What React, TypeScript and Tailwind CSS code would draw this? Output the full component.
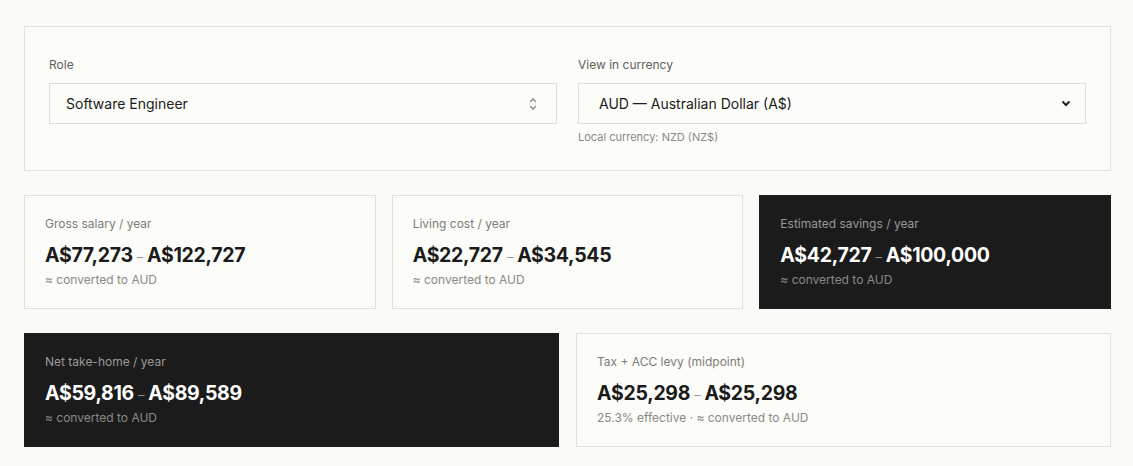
import React from 'react';

interface StatCardProps {
  label: string;
  low: string;
  high: string;
  note: string;
  dark?: boolean;
}

const StatCard: React.FC<StatCardProps> = ({ label, low, high, note, dark }) => (
  <div
    className={
      dark
        ? 'h-[114px] bg-[#1b1b1b] border border-[#1b1b1b] px-5 pt-[18px]'
        : 'h-[114px] bg-[#fcfcf9] border border-[#e3e1db] px-5 pt-[18px]'
    }
  >
    <div className={dark ? 'text-[12px] text-[#9a9a96] leading-5' : 'text-[12px] text-[#7c7c78] leading-5'}>{label}</div>
    <div
      className={
        dark
          ? 'mt-[9px] text-[19.5px] font-bold tracking-[-0.015em] text-white leading-6'
          : 'mt-[9px] text-[19.5px] font-bold tracking-[-0.015em] text-[#1b1b1b] leading-6'
      }
    >
      {low}
      <span className={dark ? 'mx-[4px] text-[13px] leading-none text-[#8a8a86] font-normal' : 'mx-[4px] text-[13px] leading-none text-[#9a9a96] font-normal'}>–</span>
      {high}
    </div>
    <div className="mt-[3px] text-[12px] text-[#8a8a86] leading-5">{note}</div>
  </div>
);

const App: React.FC = () => {
  return (
    <div className="min-h-[466px] bg-[#fafaf6] pl-6 pr-[22px] pt-[26px] font-['Inter',sans-serif] text-[#1b1b1b]">
      <div className="h-[145px] border border-[#e3e1db] bg-[#fcfcf9] px-6 pt-[28px]">
        <div className="grid grid-cols-2 gap-[21px]">
          <div>
            <div className="text-[12px] text-[#5f5f5b] leading-5">Role</div>
            <div className="mt-[8px] flex h-[41px] items-center justify-between border border-[#e0ded8] bg-[#fcfcf9] pl-4 pr-[18px]">
              <span className="text-[14px] text-[#1b1b1b]">Software Engineer</span>
              <svg width="10" height="14" viewBox="0 0 10 14" fill="none" stroke="#888884" strokeWidth="1.3">
                <path d="M2 5l3-3 3 3" />
                <path d="M2 9l3 3 3-3" />
              </svg>
            </div>
          </div>
          <div>
            <div className="text-[12px] text-[#5f5f5b] leading-5">View in currency</div>
            <div className="mt-[8px] flex h-[41px] items-center justify-between border border-[#e0ded8] bg-[#fcfcf9] pl-5 pr-[14px]">
              <span className="text-[14px] text-[#1b1b1b]">AUD — Australian Dollar (A$)</span>
              <svg width="10" height="7" viewBox="0 0 10 7" fill="none" stroke="#222" strokeWidth="2">
                <path d="M1.5 1.5l3.5 3.5 3.5-3.5" />
              </svg>
            </div>
            <div className="mt-[5px] text-[11px] text-[#8a8a86] leading-4">Local currency: NZD (NZ$)</div>
          </div>
        </div>
      </div>

      <div className="mt-[24px] grid grid-cols-3 gap-4">
        <StatCard label="Gross salary / year" low="A$77,273" high="A$122,727" note="≈ converted to AUD" />
        <StatCard label="Living cost / year" low="A$22,727" high="A$34,545" note="≈ converted to AUD" />
        <StatCard label="Estimated savings / year" low="A$42,727" high="A$100,000" note="≈ converted to AUD" dark />
      </div>

      <div className="mt-[24px] grid grid-cols-2 gap-[17px]">
        <StatCard label="Net take-home / year" low="A$59,816" high="A$89,589" note="≈ converted to AUD" dark />
        <StatCard label="Tax + ACC levy (midpoint)" low="A$25,298" high="A$25,298" note="25.3% effective · ≈ converted to AUD" />
      </div>
    </div>
  );
};

export default App;
